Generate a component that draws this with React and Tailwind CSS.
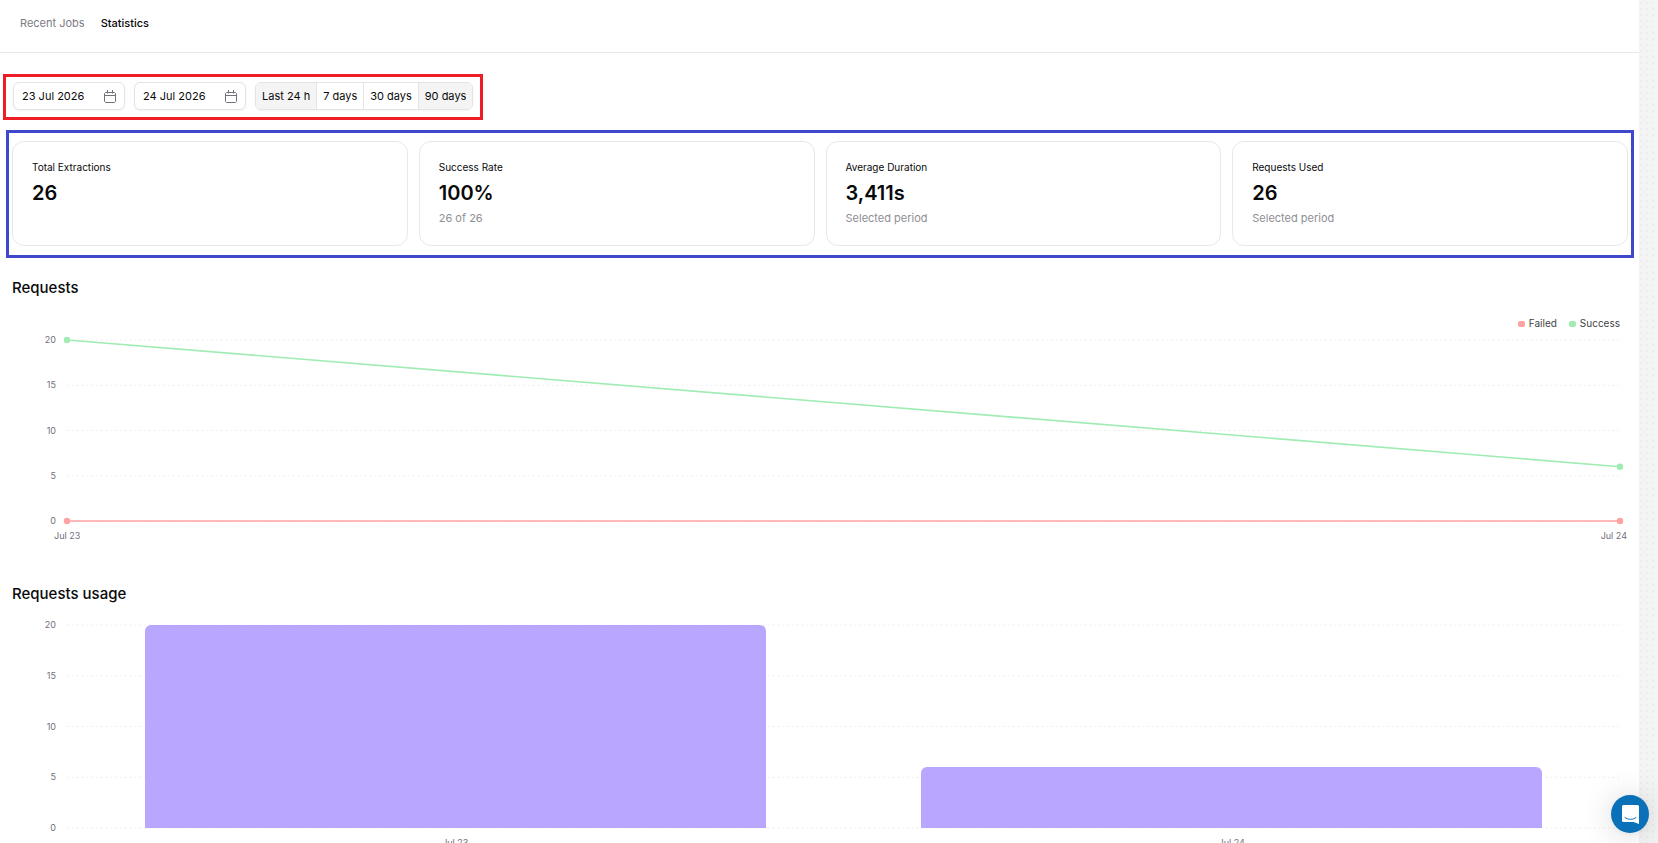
import { useState } from "react";

const navLinks = [
  { label: "Recent Jobs", active: false },
  { label: "Statistics", active: true },
];

const ranges = ["Last 24 h", "7 days", "30 days", "90 days"];
const shaded = ["Last 24 h", "90 days"];

const stats = [
  { label: "Total Extractions", value: "26", note: "" },
  { label: "Success Rate", value: "100%", note: "26 of 26" },
  { label: "Average Duration", value: "3,411s", note: "Selected period" },
  { label: "Requests Used", value: "26", note: "Selected period" },
];

const ticks = [20, 15, 10, 5, 0];
const MAX = 20;
const days = [
  { day: "Jul 23", success: 20, failed: 0, used: 20 },
  { day: "Jul 24", success: 6, failed: 0, used: 6 },
];

const percent = (value) => `${100 - (value / MAX) * 100}%`;

function CalendarIcon() {
  return (
    <svg viewBox="0 0 12 13" className="h-[13px] w-3 shrink-0" fill="none" stroke="#71717a" aria-hidden="true">
      <path d="M1.5 2.5H10.5L11.5 3.5V11.5L10.5 12.5H1.5L0.5 11.5V3.5Z" />
      <path d="M0.5 5.5H11.5M3.5 0V3.5M8.5 0V3.5" />
    </svg>
  );
}

function DateField({ label, initial }) {
  const [value, setValue] = useState(initial);
  return (
    <label className="flex h-7 w-28 items-center rounded-md border border-[#e4e4e7] bg-white px-2 shadow-xs">
      <input
        aria-label={label}
        value={value}
        onChange={(e) => setValue(e.target.value)}
        className="min-w-0 flex-1 bg-transparent text-[11px] text-[#09090b] outline-none"
      />
      <CalendarIcon />
    </label>
  );
}

function YAxis() {
  return (
    <div className="-my-2 flex w-11 flex-col justify-between text-right text-[9px] leading-4 text-[#71717a]">
      {ticks.map((t) => (
        <span key={t}>{t}</span>
      ))}
    </div>
  );
}

function GridLines() {
  return ticks.map((t) => (
    <line key={t} x1="0" x2="100%" y1={percent(t)} y2={percent(t)} stroke="#f1f1f2" strokeDasharray="2.4 2.4" />
  ));
}

function Series({ field, color }) {
  const [a, b] = days;
  return (
    <g stroke={color} strokeWidth="1.6">
      <line x1="0" x2="100%" y1={percent(a[field])} y2={percent(b[field])} />
      <circle cx="0" cy={percent(a[field])} r="2.4" fill={color} />
      <circle cx="100%" cy={percent(b[field])} r="2.4" fill={color} />
    </g>
  );
}

function LegendItem({ swatch, children }) {
  return (
    <span className="flex items-center gap-1">
      <span className={`mt-0.5 h-1.5 w-[7px] rounded-xs ${swatch}`} />
      {children}
    </span>
  );
}

export default function App() {
  const [, setRange] = useState("Last 24 h");
  return (
    <div className="flex h-screen overflow-hidden bg-[#f4f4f4] bg-[radial-gradient(#ededee_1px,transparent_1px)] bg-size-[6px_6px] font-['Inter',sans-serif] text-[#09090b]">
      <div className="min-w-0 flex-1 overflow-y-auto bg-white [scrollbar-width:none]">
        <header className="border-b border-[#e8e8ea]">
          <nav className="flex h-[52px] items-start gap-4 px-5 pt-[15px] text-[11px] leading-4">
            {navLinks.map((l) => (
              <a
                key={l.label}
                href="#"
                aria-current={l.active ? "page" : undefined}
                className={l.active ? "font-medium text-[#09090b]" : "text-[#7c7c84]"}
              >
                {l.label}
              </a>
            ))}
          </nav>
        </header>

        <main className="pt-[21px] pb-6">
          <div className="ml-[3px] flex w-fit items-center gap-[9px] border-3 border-[#ee1c25] px-[7px] pt-[5px] pb-[7px]">
            <DateField label="From" initial="23 Jul 2026" />
            <DateField label="To" initial="24 Jul 2026" />
            <div className="flex h-7 divide-x divide-[#e4e4e7] overflow-hidden rounded-md border border-[#e4e4e7] shadow-xs">
              {ranges.map((r) => (
                <button
                  key={r}
                  type="button"
                  onClick={() => setRange(r)}
                  className={`px-1.5 text-[11px] ${shaded.includes(r) ? "bg-[#f4f4f5]" : "bg-white"}`}
                >
                  {r}
                </button>
              ))}
            </div>
          </div>

          <div className="mt-[10px] mr-[5px] ml-[6px] grid grid-cols-4 gap-[11px] border-3 border-[#3f48cc] px-[3px] pt-2 pb-[9px]">
            {stats.map((s) => (
              <section key={s.label} className="h-[105px] rounded-xl border border-[#e8e8ea] px-[19px] pt-[17px]">
                <h2 className="text-[10px] leading-4">{s.label}</h2>
                <p className="mt-1.5 text-xl leading-6 font-semibold">{s.value}</p>
                <p className="mt-[3px] text-[11px] leading-5 text-[#8e8e94]">{s.note}</p>
              </section>
            ))}
          </div>

          <section className="mt-[18px] pr-[19px] pl-3">
            <h2 className="text-[15px] leading-6 font-medium">Requests</h2>
            <div className="mt-[15px] flex h-4 justify-end gap-3 text-[10px] leading-4 text-[#3f3f46]">
              <LegendItem swatch="bg-[#ffa2a2]">Failed</LegendItem>
              <LegendItem swatch="bg-[#a0ecb4]">Success</LegendItem>
            </div>
            <div className="mt-[9px] flex h-[181px] gap-[11px]">
              <YAxis />
              <svg className="h-full min-w-0 flex-1 overflow-visible" role="img" aria-label="Requests by day">
                <GridLines />
                <Series field="failed" color="#ffa2a2" />
                <Series field="success" color="#a0ecb4" />
              </svg>
            </div>
            <div className="-mr-[7px] mt-[7px] ml-[42px] flex justify-between text-[9px] leading-4 text-[#71717a]">
              {days.map((d) => (
                <span key={d.day}>{d.day}</span>
              ))}
            </div>
          </section>

          <section className="mt-[38px] pr-[19px] pl-3">
            <h2 className="text-[15px] leading-6 font-medium">Requests usage</h2>
            <div className="mt-[19px] flex h-[203px] gap-[11px]">
              <YAxis />
              <div className="grid min-w-0 flex-1">
                <svg className="col-start-1 row-start-1 h-full w-full overflow-visible" aria-hidden="true">
                  <GridLines />
                </svg>
                <div className="col-start-1 row-start-1 grid grid-cols-2 items-end">
                  {days.map((d) => (
                    <div
                      key={d.day}
                      className="mx-[10%] rounded-t-md bg-[#b8a6ff]"
                      style={{ height: `${(d.used / MAX) * 100}%` }}
                    />
                  ))}
                </div>
              </div>
            </div>
            <div className="mt-[7px] ml-[55px] grid grid-cols-2 text-center text-[9px] leading-4 text-[#71717a]">
              {days.map((d) => (
                <span key={d.day}>{d.day}</span>
              ))}
            </div>
          </section>
        </main>
      </div>
      <div className="w-[19px] shrink-0" />

      <button
        type="button"
        aria-label="Open chat"
        className="fixed right-[9px] bottom-[10px] flex size-[38px] items-center justify-center rounded-full bg-[#0a70b7] shadow-[0_1px_6px_rgba(0,0,0,0.06),0_2px_32px_rgba(0,0,0,0.16)]"
      >
        <svg viewBox="0 0 17 19" className="h-[19px] w-[17px]" aria-hidden="true">
          <path d="M1.5 0H15.5A1.5 1.5 0 0 1 17 1.5V19L11.5 17H1.5A1.5 1.5 0 0 1 0 15.5V1.5A1.5 1.5 0 0 1 1.5 0Z" fill="#fff" />
          <path d="M3 12.5C6 15 11 15 14 12.5" fill="none" stroke="#0a70b7" strokeLinecap="round" />
        </svg>
      </button>
    </div>
  );
}
